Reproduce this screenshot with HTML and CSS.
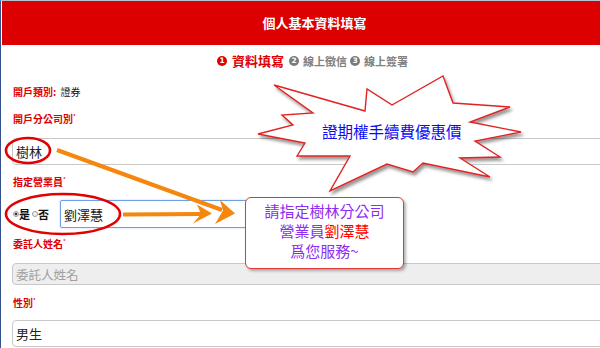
FILE: index.html
```html
<!DOCTYPE html>
<html lang="zh-Hant">
<head>
<meta charset="utf-8">
<title>個人基本資料填寫</title>
<link rel="stylesheet" href="styles.css">
</head>
<body>
<div class="page">
  <div class="header">個人基本資料填寫</div>
  <div class="steps">
    <span class="num num-on">1</span><span class="step step-on">資料填寫</span>
    <span class="num">2</span><span class="step">線上徵信</span>
    <span class="num">3</span><span class="step">線上簽署</span>
  </div>
  <div class="form">
    <div class="label l1">開戶類別: <span class="val">證券</span></div>
    <div class="label l2">開戶分公司別<sup>*</sup></div>
    <div class="input in1">樹林</div>
    <div class="label l3">指定營業員<sup>*</sup></div>
    <div class="radio-row">
      <span class="radio checked"></span><span class="rtext">是</span>
      <span class="radio"></span><span class="rtext">否</span>
      <div class="input in-focus">劉澤慧</div>
    </div>
    <div class="label l4">委託人姓名<sup>*</sup></div>
    <div class="input in2 disabled">委託人姓名</div>
    <div class="label l5">性別<sup>*</sup></div>
    <div class="input in3">男生</div>
  </div>

  <div class="overlay">
    <svg class="marks" width="600" height="348" viewBox="0 0 600 348">
      <defs>
        <filter id="sh" x="-20%" y="-20%" width="140%" height="140%">
          <feDropShadow dx="2" dy="3" stdDeviation="1.6" flood-color="#000" flood-opacity="0.4"/>
        </filter>
      </defs>
      <polygon filter="url(#sh)" fill="#fff" stroke="#e02424" stroke-width="1.4" stroke-linejoin="miter"
        points="274,85 365,111 367,89 392,105 443,76 453,103 510,107 470,122 521,132 475,141 500,157 460,158 490,177 423,163 413,172 387,164 330,191 350,156 297,156 305,143 258,134 293,125 282,115 313,113"/>
      <ellipse cx="28" cy="150.5" rx="22" ry="12.5" fill="none" stroke="#e30000" stroke-width="2.6"/>
      <ellipse cx="63" cy="214" rx="57" ry="20" fill="none" stroke="#e30000" stroke-width="2.6"/>
      <line x1="57" y1="150" x2="222" y2="210" stroke="#f5870e" stroke-width="4"/>
      <polygon fill="#f5870e" points="235,213.5 220,200 223,210.5 215,224"/>
      <line x1="123" y1="214.5" x2="201" y2="214" stroke="#f5870e" stroke-width="4"/>
      <polygon fill="#f5870e" points="212,213.5 197,204.5 201,214 193,223.5"/>
    </svg>
    <div class="burst-text">證期權手續費優惠價</div>
    <div class="callout">請指定樹林分公司<br>營業員<span class="hl">劉澤慧</span><br>爲您服務~</div>
  </div>
</div>
</body>
</html>
```
FILE: styles.css
```css
html, body {
  margin: 0;
  padding: 0;
  background: #fff;
}
body {
  width: 600px;
  height: 348px;
  overflow: hidden;
  font-family: "Noto Sans CJK TC", "Noto Sans", sans-serif;
}
.page {
  position: relative;
  width: 626px;
  height: 347px;
  border-top: 1px solid #b6c2d2;
  border-left: 1px solid #36528c;
}
.header {
  height: 44px;
  background: #dd0000;
  color: #fff;
  font-size: 13px;
  font-weight: 700;
  line-height: 44px;
  text-align: center;
  margin-left: 1px;
}
.steps {
  margin-top: 8px;
  height: 16px;
  display: flex;
  align-items: center;
  justify-content: center;
  line-height: 16px;
}
.num {
  width: 10px;
  height: 10px;
  border-radius: 50%;
  background: #7a7a7a;
  color: #fff;
  font-family: "DejaVu Sans", sans-serif;
  font-size: 7.5px;
  font-weight: 700;
  line-height: 10px;
  text-align: center;
  margin-right: 4px;
}
.num-on {
  background: #e00000;
}
.step {
  font-size: 11px;
  font-weight: 700;
  color: #808080;
  margin-right: 3px;
}
.step-on {
  font-size: 13px;
  color: #e00000;
  margin-left: 1px;
  margin-right: 5px;
}
.form {
  padding: 0 11px;
}
.label {
  font-size: 10px;
  line-height: 12px;
  height: 12px;
  font-weight: 700;
  color: #dd0000;
  padding-left: 1px;
}
.label sup {
  font-size: 6px;
  line-height: 0;
  vertical-align: 4px;
  font-weight: 400;
}
.label .val {
  color: #111;
  font-weight: 400;
  margin-left: 2px;
}
.l1 { margin-top: 17px; }
.l2 { margin-top: 15px; }
.l3 { margin-top: 11px; }
.l4 { margin-top: 10px; }
.l5 { margin-top: 12px; }
.input {
  box-sizing: border-box;
  border: 1px solid #c8c8c8;
  border-radius: 4px;
  background: #fff;
  color: #222;
  font-size: 13px;
  padding-left: 3px;
  display: flex;
  align-items: center;
}
.in1 {
  margin-top: 13px;
  height: 27px;
}
.in2 {
  margin-top: 13px;
  height: 22px;
  font-size: 12.5px;
}
.in3 {
  margin-top: 11px;
  height: 27px;
}
.disabled {
  background: #eeeeee;
  color: #a0a0a0;
}
.radio-row {
  margin-top: 12px;
  height: 28px;
  display: flex;
  align-items: center;
}
.radio {
  box-sizing: border-box;
  width: 6px;
  height: 6px;
  border-radius: 50%;
  border: 1px solid #9a9a9a;
  background: #f4f4f4;
  margin-left: 1px;
  margin-right: 0;
}
.radio.checked {
  background: radial-gradient(circle, #333 0 1.5px, #eee 1.6px);
}
.rtext {
  font-size: 11px;
  font-weight: 700;
  color: #111;
  margin-right: 1px;
}
.in-focus {
  margin-left: 10px;
  width: 200px;
  height: 28px;
  border-color: #6e9fe6;
  border-radius: 2px;
  box-shadow: 0 0 2px rgba(102, 160, 233, 0.5);
}
.overlay {
  position: absolute;
  left: -1px;
  top: -1px;
  width: 600px;
  height: 348px;
  pointer-events: none;
}
.marks {
  position: absolute;
  left: 0;
  top: 0;
}
.burst-text {
  position: absolute;
  left: 322px;
  top: 121px;
  font-size: 15.5px;
  line-height: 20px;
  color: #0c0cf0;
  white-space: nowrap;
}
.callout {
  position: absolute;
  left: 245px;
  top: 197px;
  width: 159px;
  height: 72px;
  box-sizing: border-box;
  border: 1.5px solid #de3a3a;
  border-radius: 6px;
  background: #fff;
  box-shadow: 2px 2px 3px rgba(0, 0, 0, 0.3);
  color: #8d2cf2;
  font-size: 15px;
  line-height: 20px;
  text-align: center;
  padding-top: 3px;
}
.callout .hl {
  color: #ff0000;
}
```
